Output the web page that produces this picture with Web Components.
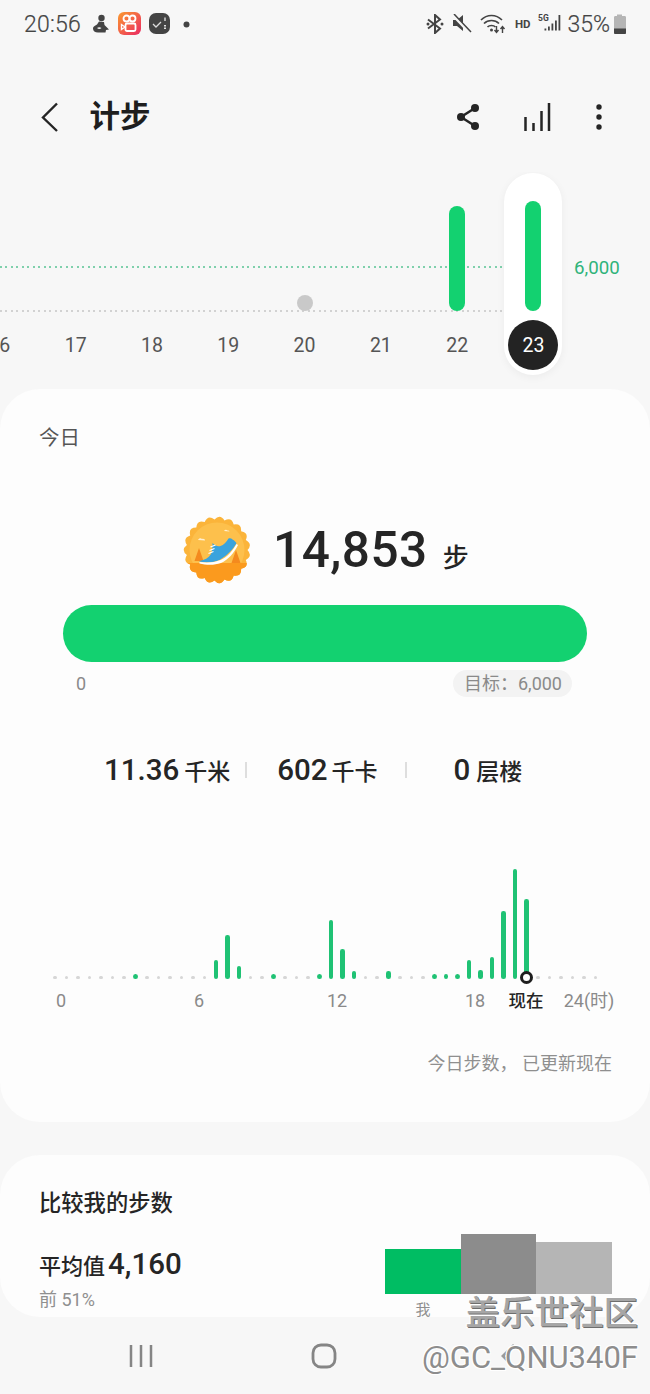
<!DOCTYPE html>
<html lang="zh">
<head>
<meta charset="utf-8">
<title>计步</title>
<style>
  html, body { margin: 0; height: 1394px; overflow: hidden; background: #f7f7f7; }
  body {
    position: relative;
    font-family: Roboto, "Noto Sans CJK SC", sans-serif;
    color: #252525;
  }
</style>
</head>
<body>
<status-bar></status-bar>
<app-bar title="计步"></app-bar>
<week-chart>
  <day-col label="16"></day-col>
  <day-col label="17"></day-col>
  <day-col label="18"></day-col>
  <day-col label="19"></day-col>
  <day-col label="20" kind="dot"></day-col>
  <day-col label="21"></day-col>
  <day-col label="22" bar="105"></day-col>
  <day-col label="23" bar="110" selected></day-col>
</week-chart>
<today-card></today-card>
<compare-card></compare-card>
<nav-bar></nav-bar>
<water-mark></water-mark>

<script>
const CJK = 'Roboto, "Noto Sans CJK SC", sans-serif';

class StatusBar extends HTMLElement {
  constructor() {
    super();
    this.attachShadow({ mode: "open" }).innerHTML = `
      <style>
        :host { display: flex; align-items: center; height: 48px; padding: 0 23px 0 24px; color: #444; font-family: ${CJK}; }
        .time { font-size: 23px; font-weight: 300; margin-right: 11px; letter-spacing: .2px; -webkit-text-stroke: .2px #444; }
        .left, .right { display: flex; align-items: center; }
        .left svg { margin-right: 7px; }
        .spacer { flex: 1; }
        .pct { font-size: 23px; font-weight: 300; margin: 0 3px 0 6px; -webkit-text-stroke: .2px #444; }
        .hd { font-size: 11.500px; font-weight: 700; margin: 0 8px 0 9px; }
        svg { display: block; }
      </style>
      <div class="left">
        <span class="time">20:56</span>
        <svg width="18" height="22" viewBox="0 0 18 22" style="margin-right:8px"><circle cx="9.500" cy="5" r="3.200" fill="#444"/><path d="M7 8.500l5 .5 .5 3 4.500 4.500-3 .5-.5 2.500H6C3 19.500 1 18 1 15.500c0-2.500 3-3 4-4z" fill="#444"/><path d="M5 15c1.500-1 3-1 4.500 0-1.500 1.200-3 1.200-4.500 0z" fill="#f7f7f7"/></svg>
        <svg width="24" height="24" viewBox="0 0 24 24">
          <defs><linearGradient id="ks" x1="0" y1="0" x2="1" y2="1"><stop offset="0" stop-color="#fb9a2e"/><stop offset="1" stop-color="#ea2a64"/></linearGradient></defs>
          <rect width="23" height="23" rx="6" fill="url(#ks)"/>
          <circle cx="8.500" cy="6.500" r="3" fill="none" stroke="#fff" stroke-width="1.800"/><circle cx="14.500" cy="6.500" r="3" fill="none" stroke="#fff" stroke-width="1.800"/>
          <rect x="7.500" y="11.500" width="10" height="7.500" rx="1.500" fill="none" stroke="#fff" stroke-width="1.800"/>
          <path d="M7 15l-3.500-2.500v5z" fill="none" stroke="#fff" stroke-width="1.400"/>
        </svg>
        <svg width="22" height="22" viewBox="0 0 22 22" style="margin-right:12px">
          <rect width="21" height="21" rx="7" fill="#444"/>
          <path d="M4 11l3 3 5-5" fill="none" stroke="#ddd" stroke-width="1.300"/>
          <path d="M16 4.500v3.500" stroke="#ddd" stroke-width="1.400"/><path d="M16 12v4" stroke="#ddd" stroke-width="2" stroke-dasharray="1.500 1"/>
        </svg>
        <svg width="7" height="7" viewBox="0 0 7 7"><circle cx="3.500" cy="3.500" r="3" fill="#444"/></svg>
      </div>
      <span class="spacer"></span>
      <div class="right">
        <svg width="18" height="20" viewBox="0 0 18 20" style="margin-right:8px"><path d="M2 5.500l12 9-5 4.500V1l5 4.500-12 9" fill="none" stroke="#444" stroke-width="2"/><circle cx="2" cy="10" r="1.500" fill="#444"/><circle cx="16" cy="10" r="1.500" fill="#444"/></svg>
        <svg width="20" height="20" viewBox="0 0 20 20" style="margin-right:8px"><path d="M1 6h4l6-5v16l-6-5H1z" fill="#444"/><path d="M1 1l16 17" stroke="#f7f7f7" stroke-width="3"/><path d="M2 0l17 18" stroke="#444" stroke-width="1.500"/></svg>
        <svg width="26" height="20" viewBox="0 0 26 20"><path d="M1 6c6-6 15-6 21 0M4 9.500c4-4 11-4 15 0M7.500 13c2-2 6-2 8 0" fill="none" stroke="#444" stroke-width="1.700"/><circle cx="11.500" cy="16" r="1.500" fill="#444"/><path d="M16.500 12v6m-2-2l2 2.500 2-2.500M22.500 19v-6m-2 2l2-2.500 2 2.500" fill="none" stroke="#444" stroke-width="1.400"/></svg>
        <span class="hd">HD</span>
        <svg width="23" height="22" viewBox="0 0 23 22"><text x="0" y="8" font-size="8.500" font-weight="700" font-family="Roboto" fill="#444">5G</text><path d="M6.500 15.500h1.800v2H6.500zM10 13.500h1.800v4H10zM13.500 10.500h1.800v7h-1.800zM17 7.500h1.800v10H17zM20.500 2h1.800v15.500h-1.800z" fill="#444"/></svg>
        <span class="pct">35%</span>
        <svg width="14" height="22" viewBox="0 0 14 22"><path d="M4 1.500h5V3h2.500c1 0 1.500.5 1.500 1.500v15c0 1-.5 1.500-1.500 1.500h-9C1.500 21 1 20.500 1 19.500v-15C1 3.500 1.500 3 2.500 3H4z" fill="#b5b5b5"/><path d="M1 15.500h12v4c0 1-.5 1.500-1.500 1.500h-9C1.500 21 1 20.500 1 19.500z" fill="#444"/></svg>
      </div>`;
  }
}

class AppBar extends HTMLElement {
  constructor() {
    super();
    this.attachShadow({ mode: "open" }).innerHTML = `
      <style>
        :host { display: flex; align-items: center; height: 124px; box-sizing: border-box; padding: 14px 48px 0 40px; font-family: ${CJK}; }
        h1 { margin: 0 0 0 29.500px; font-size: 30.500px; font-weight: 700; color: #1e1e1e; line-height: 1; flex: 1; }
        .icons { display: flex; align-items: center; gap: 28px; }
        svg { display: block; }
      </style>
      <svg width="20" height="32" viewBox="0 0 20 32"><path d="M17 2.500L3 16.500 17 30" fill="none" stroke="#252525" stroke-width="2.400"/></svg>
      <h1>${this.getAttribute("title")}</h1>
      <div class="icons">
        <svg width="26" height="28" viewBox="0 0 26 28"><path d="M20 5L6 14l14 9" fill="none" stroke="#252525" stroke-width="2.500"/><circle cx="20" cy="5" r="4" fill="#252525"/><circle cx="6" cy="14" r="4" fill="#252525"/><circle cx="20" cy="23" r="4" fill="#252525"/></svg>
        <svg width="28" height="28" viewBox="0 0 28 28" style="margin-left:14px"><path d="M2.500 14v14M10.500 20v8M18.500 8v20M26 0v28" fill="none" stroke="#252525" stroke-width="2.500"/></svg>
        <svg width="6" height="26" viewBox="0 0 6 26" style="margin-left:17px"><circle cx="3" cy="3" r="2.700" fill="#252525"/><circle cx="3" cy="13" r="2.700" fill="#252525"/><circle cx="3" cy="23" r="2.700" fill="#252525"/></svg>
      </div>`;
  }
}

class DayCol extends HTMLElement {
  constructor() {
    super();
    const selected = this.hasAttribute("selected");
    const bar = this.getAttribute("bar");
    const dot = this.getAttribute("kind") === "dot";
    this.attachShadow({ mode: "open" }).innerHTML = `
      <style>
        :host { position: relative; display: flex; flex-direction: column; align-items: center; width: 76.300px; flex: none; }
        .pill { position: absolute; left: 9.200px; top: 1px; width: 58px; height: 202px; border-radius: 29px; background: #fff; box-shadow: 0 2px 8px rgba(0,0,0,.05); }
        .area { position: relative; height: 139px; display: flex; align-items: flex-end; }
        .bar { width: 16px; border-radius: 8px; background: #13d170; }
        .dot { width: 16px; height: 16px; border-radius: 50%; background: #c9c9c9; }
        .label { position: relative; height: 68px; display: flex; align-items: center; justify-content: center; font-size: 19.500px; color: #555; }
        .sel { width: 50px; height: 50px; border-radius: 50%; background: #232323; color: #fff; display: flex; align-items: center; justify-content: center; }
      </style>
      ${selected ? '<div class="pill"></div>' : ""}
      <div class="area">${bar ? `<div class="bar" style="height:${bar}px"></div>` : dot ? '<div class="dot"></div>' : ""}</div>
      <div class="label">${selected ? `<span class="sel">${this.getAttribute("label")}</span>` : this.getAttribute("label")}</div>`;
  }
}

class WeekChart extends HTMLElement {
  constructor() {
    super();
    this.attachShadow({ mode: "open" }).innerHTML = `
      <style>
        :host { position: relative; display: block; height: 217px; font-family: ${CJK}; overflow: hidden; }
        .row { position: relative; display: flex; margin-left: -38.800px; }
        .goal, .zero { position: absolute; left: 0; width: 504px; height: 1.500px; }
        .goal { top: 94px; background: repeating-linear-gradient(to right, #7fd0ac 0 1.800px, transparent 1.800px 5.500px); }
        .zero { top: 138px; background: repeating-linear-gradient(to right, #d2d2d2 0 1.800px, transparent 1.800px 5.500px); }
        .target { position: absolute; left: 574px; top: 85px; font-size: 18.700px; line-height: 22px; color: #2fb37a; }
      </style>
      <div class="goal"></div>
      <div class="zero"></div>
      <div class="row"><slot></slot></div>
      <div class="target">6,000</div>`;
  }
}

class HourChart extends HTMLElement {
  constructor() {
    super();
    const bars = { 7: 5, 14: 19, 15: 44, 16: 13, 19: 5, 23: 5, 24: 59, 25: 30, 26: 8, 29: 8, 33: 5, 34: 5, 35: 5, 36: 19, 37: 9, 38: 22, 39: 68, 40: 110, 41: 80 };
    let slots = "";
    for (let i = 0; i < 48; i++) {
      const h = bars[i];
      slots += h
        ? `<span class="slot"><i class="${h < 6 ? "g" : "b"}" style="height:${h}px"></i></span>`
        : `<span class="slot"><i class="e"></i></span>`;
    }
    this.attachShadow({ mode: "open" }).innerHTML = `
      <style>
        :host { display: block; font-family: ${CJK}; }
        .plot { position: relative; display: flex; align-items: flex-end; height: 112px; margin-left: 49.250px; }
        .slot { width: 11.500px; flex: none; display: flex; justify-content: center; align-items: flex-end; }
        i { display: block; }
        .b { width: 4.600px; border-radius: 2.300px; background: #1fc274; }
        .g { width: 4.600px; border-radius: 50%; background: #1fc274; }
        .e { width: 3.400px; height: 3.400px; border-radius: 50%; background: #d6d6d6; }
        .now { position: absolute; left: 470.500px; bottom: -4.500px; width: 13px; height: 13px; box-sizing: border-box; border-radius: 50%; background: #fff; border: 3px solid #1e1e1e; }
        .lbl { display: flex; margin-top: 9px; font-size: 18px; line-height: 26px; color: #8a8a8a; }
        .lbl span { flex: none; text-align: center; white-space: nowrap; }
        .lbl .n { color: #252525; font-weight: 500; font-size: 17.500px; }
      </style>
      <div class="plot">${slots}<span class="now"></span></div>
      <div class="lbl">
        <span style="width:122px">0</span>
        <span style="width:154px">6</span>
        <span style="width:122px">12</span>
        <span style="width:54px;margin-left:50px">18</span>
        <span class="n" style="width:48px">现在</span>
        <span style="width:78px">24(时)</span>
      </div>`;
  }
}

class StatItem extends HTMLElement {
  constructor() {
    super();
    const gap = this.getAttribute("gap") || 4;
    this.attachShadow({ mode: "open" }).innerHTML = `
      <style>
        :host { display: inline-flex; align-items: baseline; gap: ${gap}px; white-space: nowrap; }
        b { font-size: 29.500px; font-weight: 500; color: #252525; }
        span { font-size: 23px; font-weight: 500; color: #252525; }
      </style>
      <b>${this.getAttribute("value")}</b><span>${this.getAttribute("unit")}</span>`;
  }
}

class StepBadge extends HTMLElement {
  constructor() {
    super();
    // scalloped rim: valley points joined by curves bulging out to the lobes
    const lobes = 19;
    let d = "";
    for (let i = 0; i < lobes; i++) {
      const a = (i / lobes) * Math.PI * 2;
      const m = ((i + 0.5) / lobes) * Math.PI * 2;
      const b = ((i + 1) / lobes) * Math.PI * 2;
      if (!i) d += `M${(34 + 30.5 * Math.cos(a)).toFixed(1)} ${(34 + 30.5 * Math.sin(a)).toFixed(1)}`;
      d += `Q${(34 + 36.5 * Math.cos(m)).toFixed(1)} ${(34 + 36.5 * Math.sin(m)).toFixed(1)} ${(34 + 30.5 * Math.cos(b)).toFixed(1)} ${(34 + 30.5 * Math.sin(b)).toFixed(1)}`;
    }
    this.attachShadow({ mode: "open" }).innerHTML = `
      <style>:host { display: block; width: 68px; height: 68px; } svg { display: block; }</style>
      <svg width="68" height="68" viewBox="0 0 68 68">
        <defs><clipPath id="c"><path d="${d}Z"/></clipPath></defs>
        <path d="${d}Z" fill="#fbb43a"/>
        <circle cx="34" cy="34" r="27.500" fill="#fdc04c"/>
        <g clip-path="url(#c)">
          <rect y="47" width="68" height="22" fill="#fb9a1e"/>
        </g>
        <path d="M11.500 45l4.500-13 4.500 13zM48.500 47l4.500-13 4.500 13z" fill="#f48a1e"/>
        <path d="M15 24c1-2 3-2 4-1 2-.5 3 .5 3 1.500zM41 15c1-1.500 2.500-1.500 3.500-.5 1 0 2 .5 2 1z" fill="#fff" opacity=".75"/>
        <path d="M16.500 45c5-1 9-3 11.500-7 1.500-3 1.500-7 1.500-11 2 2 5 4 8 3 3-1 6-4 8-7.500 1.500-.5 3 0 4 1 2 1 3 2.500 4 3.500-3 6-10 13-17 17-6 2.500-13 3-20 1.500z" fill="#3aa3dd"/>
        <path d="M16.500 46c8 1 15 .5 21-2 7-3 12-9 16-16l1.500 1c-4 8-10 15-17 18-7 2.500-15 2-21.500 .5z" fill="#fff"/>
        <path d="M25.500 37.500l5-2M26.500 34.500l5-2M27.500 31l5-2" stroke="#fff" stroke-width="1.300"/>
      </svg>`;
  }
}

class TodayCard extends HTMLElement {
  constructor() {
    super();
    this.attachShadow({ mode: "open" }).innerHTML = `
      <style>
        :host { display: block; height: 733px; box-sizing: border-box; background: #fdfdfd; border-radius: 40px; padding-top: 35px; font-family: ${CJK}; }
        .head { margin-left: 39px; font-size: 20.500px; line-height: 28px; color: #555; }
        .total { display: flex; align-items: center; margin: 64px 0 0 183px; height: 68px; }
        .num { margin-left: 22px; font-size: 49.500px; font-weight: 500; color: #252525; letter-spacing: .5px; }
        .unit { margin: 10px 0 0 15px; font-size: 26px; font-weight: 500; color: #252525; }
        .progress { height: 57px; margin: 21px 63px 0; border-radius: 29px; background: #13d170; }
        .scale { display: flex; justify-content: space-between; align-items: center; margin: 8px 78px 0 76px; font-size: 18px; color: #8a8a8a; }
        .goal { height: 27px; line-height: 27px; padding: 0 10px 0 11px; border-radius: 14px; background: #f3f3f3; }
        .stats { display: flex; align-items: center; margin: 53px 0 0 104px; height: 40px; }
        .sep { width: 2px; height: 16px; background: #dedede; flex: none; }
        .foot { margin: 37px 38px 0 0; text-align: right; font-size: 18px; line-height: 26px; color: #8f8f8f; }
        hour-chart { margin-top: 77px; }
      </style>
      <div class="head">今日</div>
      <div class="total"><step-badge></step-badge><span class="num">14,853</span><span class="unit">步</span></div>
      <div class="progress"></div>
      <div class="scale"><span>0</span><span class="goal">目标：6,000</span></div>
      <div class="stats">
        <stat-item value="11.36" unit="千米" gap="5"></stat-item>
        <span class="sep" style="margin:0 30px 0 15px"></span>
        <stat-item value="602" unit="千卡"></stat-item>
        <span class="sep" style="margin:0 47px 0 27px"></span>
        <stat-item value="0" unit="层楼" gap="6"></stat-item>
      </div>
      <hour-chart></hour-chart>
      <div class="foot">今日步数， 已更新现在</div>`;
  }
}

class CompareCard extends HTMLElement {
  constructor() {
    super();
    this.attachShadow({ mode: "open" }).innerHTML = `
      <style>
        :host { display: block; height: 162px; margin-top: 33px; box-sizing: border-box; background: #fdfdfd; border-radius: 40px; padding: 33px 38px 0 39px; font-family: ${CJK}; overflow: hidden; }
        h2 { margin: 0; font-size: 22.300px; line-height: 30px; font-weight: 500; color: #252525; }
        .body { display: flex; justify-content: space-between; margin-top: 16px; }
        .avg { display: flex; align-items: baseline; margin-top: 13px; gap: 3px; font-size: 22px; font-weight: 500; color: #252525; line-height: 34px; }
        .avg b { font-size: 29.500px; font-weight: 500; }
        .sub { margin-top: 4px; font-size: 18px; line-height: 24px; color: #8f8f8f; }
        .bars { display: flex; align-items: flex-end; height: 60px; }
        .bars span { display: block; }
        .me { margin: 4px 0 0; width: 76px; text-align: center; font-size: 15px; line-height: 24px; color: #8f8f8f; }
      </style>
      <h2>比较我的步数</h2>
      <div class="body">
        <div>
          <div class="avg">平均值<b>4,160</b></div>
          <div class="sub">前 51%</div>
        </div>
        <div>
          <div class="bars">
            <span style="width:76px;height:45px;background:#00bd63"></span>
            <span style="width:75px;height:60px;background:#8c8c8c"></span>
            <span style="width:76px;height:52px;background:#b5b5b5"></span>
          </div>
          <div class="me">我</div>
        </div>
      </div>`;
  }
}

class NavBar extends HTMLElement {
  constructor() {
    super();
    this.attachShadow({ mode: "open" }).innerHTML = `
      <style>
        :host { display: flex; align-items: center; height: 77px; padding-left: 129px; }
        svg { display: block; flex: none; }
      </style>
      <svg width="24" height="24" viewBox="0 0 24 24"><path d="M2 1v22M12 1v22M22 1v22" stroke="#858585" stroke-width="2.500" fill="none"/></svg>
      <svg style="margin-left:158px" width="26" height="26" viewBox="0 0 26 26"><rect x="2" y="2" width="22" height="22" rx="8" fill="none" stroke="#858585" stroke-width="2.800"/></svg>
      <svg style="margin-left:164px" width="16" height="26" viewBox="0 0 16 26"><path d="M13 2L2 13l11 11" fill="none" stroke="#9a9a9a" stroke-width="2.800"/></svg>`;
  }
}

class WaterMark extends HTMLElement {
  constructor() {
    super();
    this.attachShadow({ mode: "open" }).innerHTML = `
      <style>
        :host { position: absolute; right: 12px; top: 1292px; display: flex; flex-direction: column; align-items: flex-end; font-family: ${CJK}; }
        .a { font-size: 34.500px; line-height: 42px; font-weight: 500; color: #a6a6a6; text-shadow: 1px 1px 0 #6e6e6e, -1px -1px 0 #fff, 1px -1px 0 #fff, -1px 1px 0 #fff; }
        .b { margin-top: 6px; font-family: Roboto, sans-serif; font-size: 31px; line-height: 36px; font-weight: 400; color: #8d8d8d; text-shadow: 1px 1px 0 #fff, -1px -1px 0 #fff, 1px -1px 0 #fff, -1px 1px 0 #fff; }
      </style>
      <div class="a">盖乐世社区</div>
      <div class="b">@GC_QNU340F</div>`;
  }
}

customElements.define("status-bar", StatusBar);
customElements.define("app-bar", AppBar);
customElements.define("day-col", DayCol);
customElements.define("week-chart", WeekChart);
customElements.define("hour-chart", HourChart);
customElements.define("stat-item", StatItem);
customElements.define("step-badge", StepBadge);
customElements.define("today-card", TodayCard);
customElements.define("compare-card", CompareCard);
customElements.define("nav-bar", NavBar);
customElements.define("water-mark", WaterMark);
</script>
</body>
</html>
